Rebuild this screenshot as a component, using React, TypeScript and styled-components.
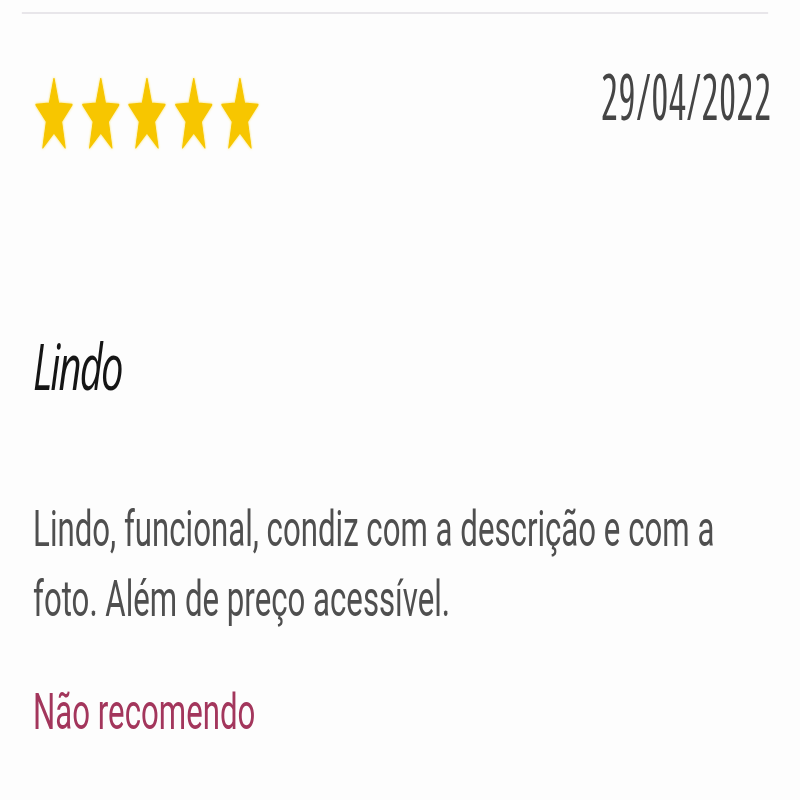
import React from "react";
import styled, { createGlobalStyle } from "styled-components";

const SQUEEZE = 0.624;

const Global = createGlobalStyle`
  html, body { margin: 0; padding: 0; overflow: hidden; background: #fdfdfd; }
`;

const Page = styled.div`
  width: ${800 / SQUEEZE}px;
  height: 800px;
  transform: scaleX(${SQUEEZE});
  transform-origin: 0 0;
  box-sizing: border-box;
  padding: 0 48px 0 53px;
  display: flex;
  flex-direction: column;
  font-family: Roboto, "Liberation Sans", sans-serif;
`;

const Divider = styled.div`
  margin: 12px 3px 0 -18px;
  height: 2px;
  background: #e8e6ea;
`;

const Header = styled.div`
  margin-top: 50px;
  display: flex;
  justify-content: space-between;
  align-items: flex-start;
`;

const Stars = styled.div`
  margin: 14px 0 0 3px;
  display: flex;
  gap: 13.5px;
`;

const StarSvg = styled.svg`
  width: 61px;
  height: 72px;
  display: block;
  filter: drop-shadow(0 0 1.5px rgba(250, 215, 40, 0.75));
`;

const DateText = styled.div`
  font-family: "Open Sans", sans-serif;
  font-stretch: 75%;
  font-size: 63px;
  line-height: 63px;
  letter-spacing: 1.3px;
  margin-right: -3px;
  color: #454545;
`;

const Title = styled.div`
  margin-top: 182px;
  font-family: "Open Sans", sans-serif;
  font-style: italic;
  font-size: 64px;
  line-height: 67px;
  letter-spacing: -3px;
  color: #151515;
`;

const Body = styled.p`
  margin: 95px 0 0;
  font-size: 50px;
  line-height: 70px;
  color: #4f4f4f;
`;

const Verdict = styled.div`
  margin-top: 43px;
  font-size: 50px;
  line-height: 70px;
  color: #a3365c;
`;

const starPoints = (() => {
  const R = 12;
  const r = R * 0.42;
  const cx = 12;
  const cy = 12.6;
  const pts: string[] = [];
  for (let i = 0; i < 10; i++) {
    const rad = i % 2 === 0 ? R : r;
    const a = -Math.PI / 2 + (i * Math.PI) / 5;
    pts.push(`${(cx + rad * Math.cos(a)).toFixed(2)},${(cy + rad * Math.sin(a)).toFixed(2)}`);
  }
  return pts.join(" ");
})();

function Star() {
  return (
    <StarSvg viewBox="0 0.6 24 22.4" preserveAspectRatio="none">
      <polygon points={starPoints} fill="#f7c600" strokeLinejoin="round" stroke="#f7c600" strokeWidth="0.6" />
    </StarSvg>
  );
}

export default function App() {
  return (
    <>
      <Global />
      <Page>
        <Divider />
        <Header>
          <Stars>
            {[0, 1, 2, 3, 4].map((i) => (
              <Star key={i} />
            ))}
          </Stars>
          <DateText>29/04/2022</DateText>
        </Header>
        <Title>Lindo</Title>
        <Body>
          Lindo, funcional, condiz com a descrição e com a foto. Além de preço acessível.
        </Body>
        <Verdict>Não recomendo</Verdict>
      </Page>
    </>
  );
}
